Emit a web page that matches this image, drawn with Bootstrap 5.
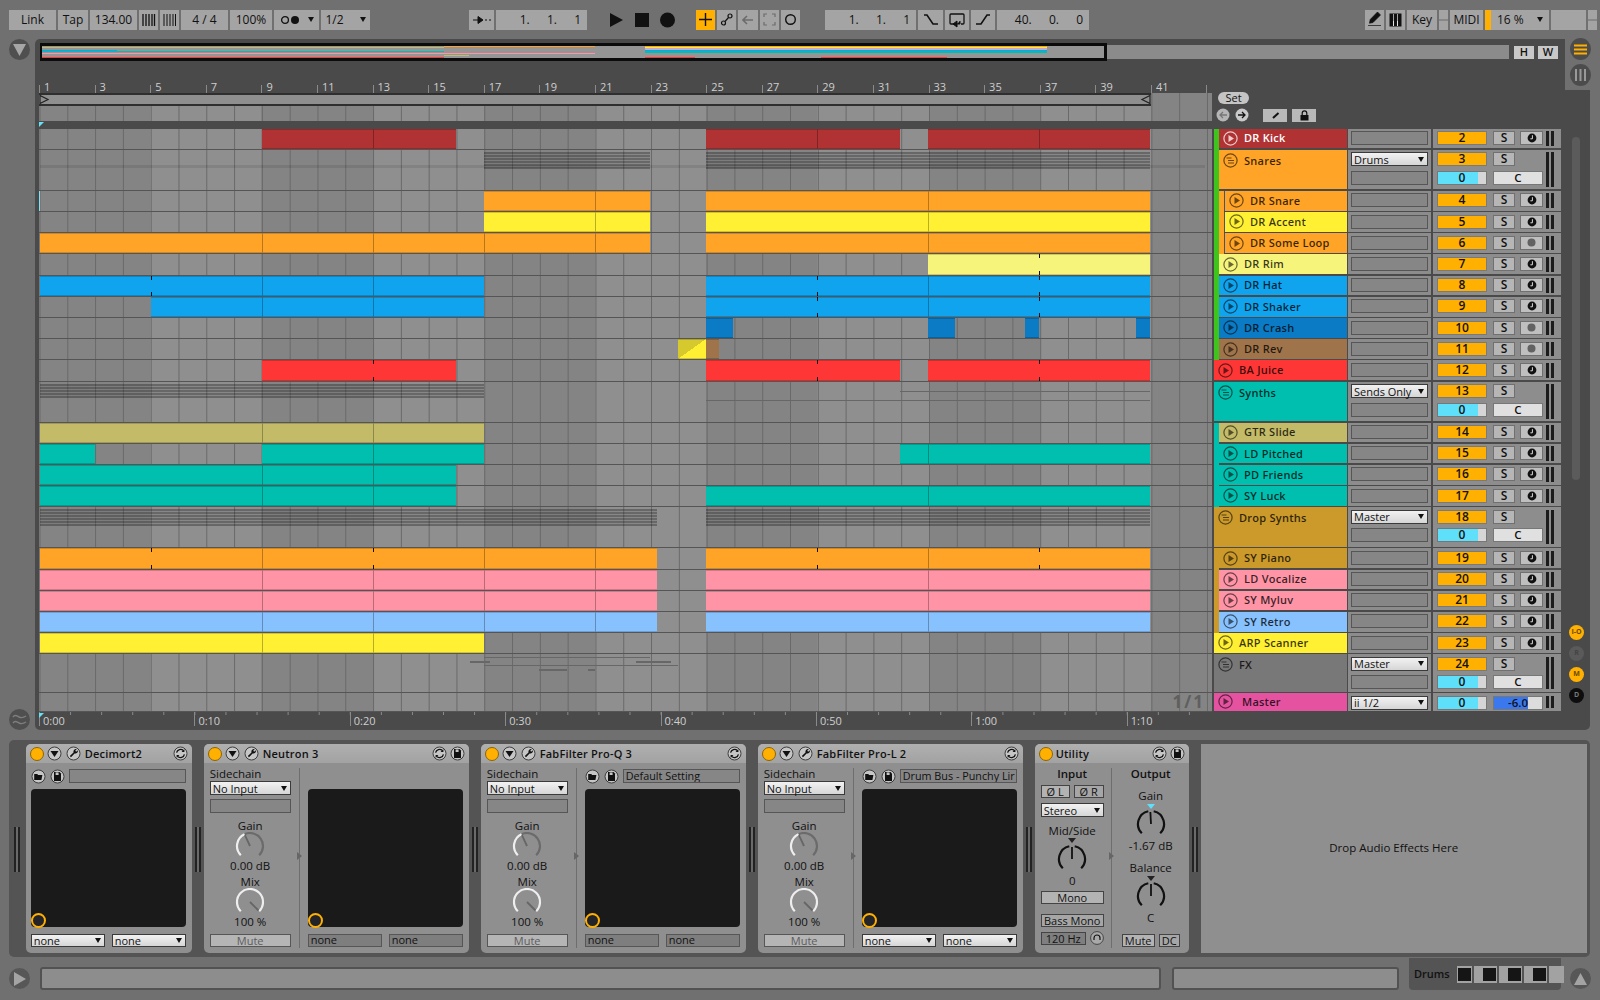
<!DOCTYPE html>
<html lang="en">
<head>
<meta charset="utf-8">
<title>Live Arrangement</title>
<link href="https://cdn.jsdelivr.net/npm/bootstrap@5.3.0/dist/css/bootstrap.min.css" rel="stylesheet">
<style>
html,body{width:1600px;height:1000px;overflow:hidden;margin:0}
body{background:#707070;font-family:"Open Sans","Liberation Sans",sans-serif;font-size:11.5px;color:#111;line-height:1.1}
svg{display:block;flex:none}
/* toolbar */
.toolbar{height:39px;padding-left:9px;gap:2px}
.tgroup{gap:2px;height:20px}
.tb{background:#a4a4a4;height:20px;flex:none;padding:0;border:0;border-radius:0;font-size:12px;line-height:20px;color:#111;display:flex;align-items:center;justify-content:center}
.tb.on{background:#ffb000}
.tb.num{justify-content:flex-end;padding-right:6px;word-spacing:5.5px;white-space:pre}
.w9{width:9px}.w19{width:19px}.w20{width:20px}.w24{width:24px}.w25{width:25px}.w30{width:30px}.w33{width:33px}.w35{width:35px}.w42{width:42px}.w45{width:45px}.w47{width:47px}.w49{width:49px}.w64{width:64px}.w91{width:91px}.w92{width:92px}
.m99{margin-left:97px}.m23{margin-left:21px}.m21{margin-left:19px}.m25{margin-left:23px}.m276{margin-left:274px}
.caret-d{display:block;flex:none;width:0;height:0;border-left:3.5px solid transparent;border-right:3.5px solid transparent;border-top:5px solid #111}
.cpu{background:linear-gradient(to right,#ffb000 6px,#a4a4a4 6px);padding-left:12px;padding-right:6px;justify-content:space-between}
/* workspace */
.work{height:691px}
.gutter{width:35px;flex:none;padding-left:9px}
.gcirc{width:21px;height:21px;border-radius:50%;background:#4f4f4f;display:flex;align-items:center;justify-content:center}
.panel{width:1555px;height:691px;flex:none;background:#4a4a4a;border-radius:5px;padding:4px 0 0 4px;position:relative}
.notch{position:absolute;right:-1px;top:-1px;width:26px;height:52px;background:#707070;display:flex;flex-direction:column;align-items:center;gap:4px;padding-left:4px}
.mcirc{width:21px;height:22px;border-radius:50%;background:#4c4c4c;display:flex;align-items:center;justify-content:center;flex:none}
.overview-row{height:18px;margin-bottom:19px;padding-left:1px}
.ov{width:1469px;display:flex;height:18px}
.ov-main{width:1067px;flex:none;border:3px solid #0b0b0b;border-left-width:2px;background:#959595;display:flex;flex-direction:column;overflow:hidden}
.ov-lane{display:grid;grid-template-columns:repeat(170,6.29px);height:1px;flex:none}
.ov-rest{flex:1;background:#8b8b8b;margin:2px 0 2px}
.hw{background:#c8c8c8;width:20px;height:13px;font-size:11px;font-weight:600;display:flex;align-items:center;justify-content:center;margin-top:3px}
.mlh{margin-left:5px}.mlw{margin-left:4px}
/* lanes */
.lane{display:grid;grid-template-columns:repeat(168,6.95px);grid-template-rows:1fr;width:1173px;flex:none;padding-left:.5px;border-bottom:1.5px solid #555;
background:linear-gradient(to right,#696969 1px,transparent 1px) .5px 0/27.8px 100%,repeating-linear-gradient(to right,#848484 0,#848484 111.2px,#8f8f8f 111.2px,#8f8f8f 222.4px)}
.lane-bg{background:linear-gradient(to right,#696969 1px,transparent 1px) .5px 0/27.8px 100%,repeating-linear-gradient(to right,#848484 0,#848484 111.2px,#8f8f8f 111.2px,#8f8f8f 222.4px)}
.seg{grid-row:1;min-width:0;box-shadow:inset 0 1px rgba(0,0,0,.18),inset 0 -1px rgba(0,0,0,.18)}
.seg.cut{border-left:1px solid rgba(0,0,0,.28)}
.seg.tick{background-image:linear-gradient(#111,#111),linear-gradient(#111,#111);background-size:1px 4px,1px 4px;background-position:0 0,0 100%;background-repeat:no-repeat}
.seg.diag{background-image:linear-gradient(to bottom right,#d6c92e 50%,#fff034 50%)}
.notes{grid-row:1;align-self:start;background:repeating-linear-gradient(to bottom,rgba(0,0,0,.28) 0,rgba(0,0,0,.28) 2px,rgba(0,0,0,.06) 2px,rgba(0,0,0,.06) 3px)}
.note{grid-row:1;align-self:start;background:#676767}
.band{grid-row:1;grid-column:1/169;align-self:start;height:3px;background:rgba(0,0,0,.09)}
.ins{box-shadow:inset 1px 0 #7ae6f4}
.onefrac{grid-row:1;grid-column:158/169;justify-self:end;align-self:center;font-size:17px;letter-spacing:2px;font-weight:700;color:#5f5f5f;line-height:16px;white-space:nowrap}
/* header */
.hdr{height:48.7px}
.hdr-l{width:1173px;flex:none}
.ruler{height:13px;color:#cfcfcf;font-size:11px}
.ruler div{width:55.6px;flex:none;border-left:1px solid #8a8a8a;padding-left:4px;height:8px;margin-top:5px;display:flex;align-items:flex-end;line-height:12px}
.brace-row{height:13px}
.brace{width:1112px;flex:none;background:#8f8f8f;border-top:2px solid #2f2f2f;border-bottom:2px solid #2f2f2f;justify-content:space-between}
.strip-row{height:15px;margin-top:0}
.marker{height:8.7px;position:relative}
.cy{position:absolute;left:0;top:1px;width:0;height:0;border-top:5px solid #63e3f5;border-right:5px solid transparent}
.setp{padding:12px 0 0 6px;gap:4px}
.setb{width:31px;height:12px;background:#c4c4c4;border-radius:6px;font-size:11px;display:flex;align-items:center;justify-content:center}
.setrow{align-items:center;gap:5px;margin-left:-2px}
.smb{width:24px;height:13px;background:#b9b9b9;display:flex;align-items:center;justify-content:center}
.ml9{margin-left:9px}
/* tracks */
.trk{height:21.2px;display:flex;flex:none}
.trk.grp{height:41px}
.trk.fxr{height:38.8px}
.trk.mst{height:19.4px}
.head{width:133px;margin-left:2px;flex:none;display:flex;height:100%}
.strip{width:5px;flex:none;height:100%}
.tbody{flex:1;min-width:0;height:calc(100% - 1.5px);display:flex;align-items:center;font-weight:600;font-size:11px;letter-spacing:.25px;padding-left:4px;gap:6px;white-space:nowrap}
.tbody.nest{border-left:1px solid #46566a;padding-left:4px}
.tbody.g{align-items:flex-start;padding-top:3px}
.tbody.g span{line-height:15px}
.mst .tbody{gap:9px}
.sends{width:83px;margin-left:1px;flex:none;height:calc(100% - 1.5px);background:#8c8c8c;padding:2.5px 3px;display:flex;flex-direction:column;gap:4.5px}
.bx{height:14px;flex:none;background:#868686;border:1.5px solid #565656;padding:0 2px;overflow:hidden;white-space:nowrap;line-height:11px;font-size:11px}
.sel{display:flex;align-items:center;justify-content:space-between;background:linear-gradient(#f2f2f2,#d6d6d6);border:1px solid #3a3a3a;height:14px;padding:0 3px 0 2px;line-height:11px;white-space:nowrap;flex:none;font-size:11px}
.mix{width:128px;margin-left:2px;flex:none;height:calc(100% - 1.5px);background:#8d8d8d;display:flex;padding:2.5px 3px 2.5px 4px}
.mixl{width:106px;flex:none;display:flex;flex-direction:column;gap:4.5px}
.mline{display:flex;gap:6px;height:14px;flex:none}
.numb{width:50px;flex:none;background:#ffb000;border:1px solid #7a7a7a;font-weight:600;font-size:12px;text-align:center;line-height:12px}
.sb{width:22px;flex:none;background:#b6b6b6;border:1px solid #707070;font-size:12px;font-weight:600;text-align:center;line-height:12px}
.mon{width:23px;flex:none;margin-left:-1px;background:#bfbfbf;border:1px solid #707070;display:flex;align-items:center;justify-content:center}
.vol{width:50px;flex:none;background:linear-gradient(to right,#5fe0fa 84%,#d6d6d6 84%);border:1px solid #777;font-weight:600;font-size:12px;text-align:center;line-height:12px}
.cbx{width:50px;flex:none;background:#e0e0e0;border:1px solid #777;font-size:11.5px;font-weight:600;text-align:center;line-height:12px}
.cbx.db{background:linear-gradient(to right,#3a78f0 70%,#dcdcdc 70%)}
.meter{width:8px;flex:none;margin-left:3px;background:linear-gradient(to right,#1c1c1c 3px,#8d8d8d 3px,#8d8d8d 5px,#1c1c1c 5px)}
.side{width:29px;flex:none}
.scroll{width:8px;height:343px;margin:8px 0 0 11px;background:#5b5b5b;border-radius:4px}
.sidec{margin:145px 0 0 8px;gap:6px}
.sc{width:15px;height:15px;border-radius:50%;font-size:7px;font-weight:700;display:flex;align-items:center;justify-content:center;background:#ffb000;color:#6b4a00;flex:none}
.sc.off{background:#5a5a5a;color:#444}
.sc.dark{background:#0d0d0d;color:#777}
.times{width:1173px;height:17.3px;color:#cfcfcf;font-size:11px;background:linear-gradient(to right,#8a8a8a 1px,transparent 1px) 0 0/31.08px 3px repeat-x;position:relative}
.times div{width:155.4px;flex:none;border-left:1px solid #8a8a8a;height:14px;padding:2px 0 0 3px;line-height:13px}
/* devices */
.devs{margin:10px 0 0 9px;width:1581px;height:217px;background:#545454;border-radius:5px;padding:4px 3px 4px 0;display:flex}
.grip{width:16.7px;flex:none;display:flex;justify-content:center;padding-top:83px}
.grip.g12{width:12px}
.grip i{display:block;width:6px;height:45px;background:linear-gradient(to right,#222 2px,#6a6a6a 2px,#6a6a6a 4px,#222 4px)}
.dev{background:#8f8f8f;border:0;border-radius:5px;overflow:hidden;flex:none;height:209px;color:#111}
.w166{width:166px}.w265{width:265px}.w154{width:154px}
.dev .card-header{background:linear-gradient(#b0b0b0,#a2a2a2);height:19.3px;padding:0 3.5px 0 4px;border:0;border-radius:0;display:flex;align-items:center;font-weight:600;font-size:11px;letter-spacing:.2px;white-space:nowrap}
.pow{width:14px;height:14px;border-radius:50%;background:#ffb000;border:1px solid #8c6400;flex:none;margin-right:3px}
.ic{margin-right:4px}
.hbtn{gap:3px}
.hbtn .ic{margin-right:0}
.dev .card-body{padding:0;height:189.7px;display:flex}
.lc{width:81px;margin-left:6px;flex:none;display:flex;flex-direction:column;align-items:stretch;padding-top:5px}
.lab{height:12px;line-height:12px;text-align:center;flex:none;font-size:11.5px;white-space:nowrap}
.lab.l{text-align:left}
.knobw{display:flex;justify-content:center;flex:none;height:28px}
.vdiv{width:1px;background:#6e6e6e;margin:5px 0 5px 8px;flex:none;position:relative}
.vdiv:after{content:"";position:absolute;left:-2px;top:84px;border-left:5px solid #666;border-top:4px solid transparent;border-bottom:4px solid transparent}
.rc{width:155px;margin-left:8px;flex:none;display:flex;flex-direction:column;padding-top:6px}
.rc.solo{margin-left:5px}
.prow{height:14px;flex:none;gap:4px;align-items:center;display:flex}
.prow .bx{flex:1;min-width:0;font-size:10.8px}
.blackbox{flex:none;height:138px;margin-top:6px;background:#1a1a1a;border-radius:4px;display:flex;align-items:flex-end}
.ring{width:15px;height:15px;border-radius:50%;border:2px solid #ffb000;background:#22242a;flex:none;margin-bottom:-1px}
.pair{display:flex;justify-content:space-between;margin-top:7px}
.pair>*{width:74px}
.pair .bx{background:#7e7e7e;height:13px;line-height:10px;overflow:visible}
.pair .sel{height:13px}
.mute{height:13px;flex:none;margin-top:6px;background:#b5b5b5;border:1px solid #565656;color:#5c5c5c;text-align:center;line-height:11px;font-size:11px}
.ub{background:#a6a6a6;border:1px solid #444;height:13px;text-align:center;line-height:11px;flex:none;font-size:11px;white-space:nowrap}
.ub.lt{background:#b3b3b3}
.ub.dk{background:#7f7f7f}
.tri-b{width:0;height:0;border-left:4px solid transparent;border-right:4px solid transparent;border-top:5px solid #222;flex:none;align-self:center}
.tri-c{border-top-color:#5fe0fa}
.ucl{width:63px;margin-left:6px;flex:none;display:flex;flex-direction:column;padding-top:5px}
.ucr{width:58px;margin-left:10px;flex:none;display:flex;flex-direction:column;padding-top:5px}
.udiv{width:1px;background:#6e6e6e;margin:5px 0 5px 7px;flex:none;position:relative}
.udiv:after{content:"";position:absolute;left:-2px;top:84px;border-left:5px solid #666;border-top:4px solid transparent;border-bottom:4px solid transparent}
.mt5{margin-top:5px}.mt7{margin-top:7px}.mt8{margin-top:8px}.mt10{margin-top:10px}.mt2{margin-top:2px}.mt1{margin-top:1px}.mt4{margin-top:4px}
.drop{width:386px;flex:none;height:209px;background:#8f8f8f;display:flex;align-items:center;justify-content:center;font-size:11.5px}
/* bottom */
.bottom{height:43px;padding-left:9px;align-items:flex-start}
.pbtn{width:21px;height:21px;margin-top:11px;border-radius:50%;background:#575757;display:flex;align-items:center;justify-content:center;flex:none}
.field{height:23px;margin-top:10px;background:#8d8d8d;border:2px solid #525252;border-radius:3px;flex:none}
.f1{width:1121px;margin-left:10px}.f2{width:227px;margin-left:11px}
.dtab{width:152px;height:32px;margin:1px 0 0 10px;background:#545454;border-radius:0 0 4px 4px;flex:none;display:flex;align-items:center;padding-left:5px;gap:2px;font-weight:600;font-size:11px}
.dtab span{margin-right:5px}
.th{height:17px;flex:none;background:#a2a2a2;display:flex;justify-content:flex-end}
.th i{display:block;width:13px;height:13px;margin:2px 1px;background:#151515}
.tw15{width:15px}.tw22{width:23px}
.ubtn{margin:11px 0 0 9px;width:21px;height:21px;border-radius:50%;background:#575757;display:flex;align-items:center;justify-content:center;flex:none}
</style>
</head>
<body>
<!-- transport -->
<div class="toolbar d-flex align-items-center">
  <button class="btn tb w47">Link</button>
  <button class="btn tb w30">Tap</button>
  <button class="btn tb w47">134.00</button>
  <div class="tb w19"><svg width="15" height="14"><path d="M2 1v12M5 1v12M8 1v12M11 1v12M13.5 1v12" stroke="#111" stroke-width="1.3"/></svg></div>
  <div class="tb w19"><svg width="15" height="14"><path d="M2 1v12M5 1v12M8 1v12M11 1v12M13.5 1v12" stroke="#111" stroke-width="1"/></svg></div>
  <button class="btn tb w47">4 / 4</button>
  <button class="btn tb w42">100%</button>
  <div class="tb w45 gap-2"><svg width="20" height="10"><circle cx="5" cy="5" r="3.4" fill="none" stroke="#111" stroke-width="1.3"/><circle cx="15" cy="5" r="4" fill="#111"/></svg><i class="caret-d"></i></div>
  <div class="tb w49 gap-3"><span>1/2</span><i class="caret-d"></i></div>
  <div class="d-flex tgroup m99">
    <div class="tb w25"><svg width="20" height="10"><path d="M1 5h6M6 1.5l5 3.5-5 3.5z" stroke="#111" fill="#111"/><path d="M13 5h2M17 5h2" stroke="#111"/></svg></div>
    <div class="tb w91 num">1.  1.  1</div>
  </div>
  <svg class="m23" width="65" height="20"><path d="M0 3l13 7-13 7z" fill="#111"/><rect x="25" y="3" width="14" height="14" fill="#111"/><circle cx="57.5" cy="10" r="7.5" fill="#111"/></svg>
  <div class="d-flex tgroup m21">
    <div class="tb w19 on"><svg width="13" height="13"><path d="M6.5 0v13M0 6.5h13" stroke="#111" stroke-width="1.4"/></svg></div>
    <div class="tb w19"><svg width="13" height="13"><circle cx="3.5" cy="10" r="2" fill="none" stroke="#111" stroke-width="1.2"/><circle cx="10" cy="3" r="2" fill="none" stroke="#111" stroke-width="1.2"/><path d="M5 8.5l3.5-4" stroke="#111" stroke-width="1.2"/></svg></div>
    <div class="tb w20"><svg width="12" height="10"><path d="M1 5h10M5 1L1 5l4 4" stroke="#6c6c6c" stroke-width="1.6" fill="none"/></svg></div>
    <div class="tb w19"><svg width="13" height="13"><path d="M1 4V1h3M9 1h3v3M12 9v3H9M4 12H1V9" stroke="#6c6c6c" fill="none" stroke-width="1.2"/></svg></div>
    <div class="tb w19"><svg width="13" height="13"><circle cx="6.5" cy="6.5" r="4.8" fill="none" stroke="#111" stroke-width="1.4"/></svg></div>
  </div>
  <div class="d-flex tgroup m25">
    <div class="tb w91 num">1.  1.  1</div>
    <div class="tb w25"><svg width="18" height="14"><path d="M2 2h3l6 9h5" stroke="#111" stroke-width="1.6" fill="none"/></svg></div>
    <div class="tb w24"><svg width="18" height="16"><path d="M8 12H3a1 1 0 0 1-1-1V3a1 1 0 0 1 1-1h12a1 1 0 0 1 1 1v8a1 1 0 0 1-1 1h-2" stroke="#111" stroke-width="1.3" fill="none"/><path d="M9 15l-4-3 4-3zM9 12h3V9" fill="#111" stroke="#111"/></svg></div>
    <div class="tb w24"><svg width="18" height="14"><path d="M2 11h5l6-9h3" stroke="#111" stroke-width="1.6" fill="none"/></svg></div>
    <div class="tb w92 num">40.  0.  0</div>
  </div>
  <div class="d-flex tgroup m276">
    <div class="tb w19"><svg width="13" height="15"><path d="M9.5 0l3 3-7.5 7.5-3.5.7.7-3.7zM0 13.5h13" fill="#111" stroke="#111" stroke-width=".7"/></svg></div>
    <div class="tb w19"><svg width="13" height="14"><rect x=".5" y=".5" width="12" height="13" fill="#111"/><path d="M4.5 1v12M8.5 1v12" stroke="#a4a4a4"/><path d="M4.5 8v5M8.5 8v5" stroke="#e4e4e4" stroke-width="1"/></svg></div>
    <div class="tb w30">Key</div>
    <div class="tb w9"><svg width="9" height="20"><path d="M0 10h9" stroke="#6a6a6a"/></svg></div>
    <div class="tb w33">MIDI</div>
    <div class="tb w64 cpu"><span>16 %</span><i class="caret-d"></i></div>
    <div class="tb w35"></div>
    <div class="tb w9"><svg width="9" height="20"><path d="M0 10h9" stroke="#6a6a6a"/></svg></div>
  </div>
</div>

<div class="work d-flex">
  <div class="gutter d-flex flex-column justify-content-between">
    <div class="gcirc"><svg width="13" height="13"><path d="M0 1h13L6.5 13z" fill="#a6a6a6"/></svg></div>
    <div class="gcirc"><svg width="15" height="13"><path d="M1 4c2-3 4-1 6 0s4 1 7-1M1 10c2-3 4-1 6 0s4 1 7-1" stroke="#7e7e7e" stroke-width="1.4" fill="none"/></svg></div>
  </div>
  <div class="panel">
    <div class="notch">
      <div class="mcirc"><svg width="13" height="11"><path d="M0 1.5h13M0 5.5h13M0 9.5h13" stroke="#ffb000" stroke-width="2"/></svg></div>
      <div class="mcirc"><svg width="13" height="14"><path d="M2 1v12M6.5 1v12M11 1v12" stroke="#999" stroke-width="2"/></svg></div>
    </div>
    <div class="overview-row d-flex">
      <div class="ov"><div class="ov-main" id="ov"></div><div class="ov-rest"></div></div>
      <div class="hw mlh">H</div><div class="hw mlw">W</div>
    </div>
    <div class="hdr d-flex">
      <div class="hdr-l">
        <div class="ruler d-flex" id="ruler"></div>
        <div class="brace-row d-flex lane-bg">
          <div class="brace d-flex align-items-center">
            <svg width="11" height="9"><path d="M1 .5l8 4-8 4z" fill="none" stroke="#222" stroke-width="1.2"/></svg>
            <svg width="11" height="9"><path d="M10 .5l-8 4 8 4z" fill="none" stroke="#222" stroke-width="1.2"/></svg>
          </div>
        </div>
        <div class="strip-row lane-bg"></div>
        <div class="marker"><i class="cy"></i></div>
      </div>
      <div class="setp d-flex flex-column">
        <div class="setb">Set</div>
        <div class="d-flex setrow">
          <svg width="14" height="14"><circle cx="7" cy="7" r="6.5" fill="#b5b5b5"/><path d="M11 7H4M7 4L4 7l3 3" stroke="#777" stroke-width="1.3" fill="none"/></svg>
          <svg width="14" height="14"><circle cx="7" cy="7" r="6.5" fill="#c9c9c9"/><path d="M3 7h7M7 4l3 3-3 3" stroke="#111" stroke-width="1.3" fill="none"/></svg>
          <div class="smb ml9"><svg width="11" height="9"><path d="M8.5 2L3 7" stroke="#111" stroke-width="2"/></svg></div>
          <div class="smb"><svg width="11" height="11"><rect x="1.5" y="5" width="8" height="5.5" fill="#111"/><path d="M3.2 5V3.2a2.3 2.3 0 0 1 4.6 0V5" stroke="#111" fill="none" stroke-width="1.2"/></svg></div>
        </div>
      </div>
    </div>
    <div class="d-flex">
      <div id="rows"></div>
      <div class="side">
        <div class="scroll"></div>
        <div class="sidec d-flex flex-column">
          <div class="sc">I-O</div><div class="sc off">R</div><div class="sc">M</div>
          <div class="sc dark">D</div>
        </div>
      </div>
    </div>
    <div class="times d-flex" id="times"></div>
  </div>
</div>

<div class="devs" id="devs"></div>

<div class="bottom d-flex">
  <div class="pbtn"><svg width="13" height="14"><path d="M1 0l12 7-12 7z" fill="#a4a4a4"/></svg></div>
  <div class="field f1"></div>
  <div class="field f2"></div>
  <div class="dtab"><span>Drums</span>
    <div class="th tw15"><i></i></div><div class="th tw22"><i></i></div><div class="th tw22"><i></i></div><div class="th tw22"><i></i></div><div class="th tw15"></div>
  </div>
  <div class="ubtn"><svg width="13" height="12"><path d="M6.5 0L13 12H0z" fill="#a4a4a4"/></svg></div>
</div>

<script>
const OR='#ffa426',YE='#fff034',RI='#f7f47c',BL='#10a4ee',CR='#0a7bc4',BR='#a0744a',RD='#ff3636',TE='#00bfaf',GT='#c3bb68',DS='#cb9a2a',PK='#ff94a6',SK='#88c2fe',KI='#b03232',GR='#3fc41e',FX='#787878',MA='#e553a0';
const T=[
 {n:'DR Kick',c:KI,s:[GR],k:2,light:1,all:1,cl:[[8,15],[24,31],[32,40]]},
 {n:'Snares',c:OR,s:[GR],g:1,k:3,sel:'Drums',nt:[[16,22],[24,40]],nh:17,band:15},
 {n:'DR Snare',c:OR,s:[GR,OR],nest:1,k:4,cl:[[16,22],[24,40]],ins:1},
 {n:'DR Accent',c:YE,s:[GR,OR],nest:1,k:5,cl:[[16,22],[24,40]]},
 {n:'DR Some Loop',c:OR,s:[GR,OR],nest:1,k:6,cl:[[0,22],[24,40]],off:1},
 {n:'DR Rim',c:RI,s:[GR],k:7,cl:[[32,40]],t:[36]},
 {n:'DR Hat',c:BL,s:[GR],k:8,cl:[[0,16],[24,40]],t:[4,28,36]},
 {n:'DR Shaker',c:BL,s:[GR],k:9,cl:[[4,16],[24,40]],t:[28,36]},
 {n:'DR Crash',c:CR,s:[GR],k:10,cl:[[24,25],[32,33],[35.5,36],[39.5,40]],off:1},
 {n:'DR Rev',c:BR,s:[GR],k:11,cl:[[23,24,YE,'diag'],[24,24.5]],off:1},
 {n:'BA Juice',c:RD,s:[],k:12,cl:[[8,15],[24,31],[32,40]],t:[12,28,36]},
 {n:'Synths',c:TE,s:[],g:1,k:13,sel:'Sends Only',nt:[[0,16]],nh:14,ex:[[24,40,18,1],[31,40,9,1]]},
 {n:'GTR Slide',c:GT,s:[TE],k:14,cl:[[0,16]]},
 {n:'LD Pitched',c:TE,s:[TE],k:15,cl:[[0,2],[8,16],[31,40]]},
 {n:'PD Friends',c:TE,s:[TE],k:16,cl:[[0,15]]},
 {n:'SY Luck',c:TE,s:[TE],k:17,cl:[[0,15],[24,40]]},
 {n:'Drop Synths',c:DS,s:[],g:1,k:18,sel:'Master',nt:[[0,22.25],[24,40]],nh:17},
 {n:'SY Piano',c:DS,s:[DS],k:19,cl:[[0,22.25,OR],[24,40,OR]],t:[4,12,28,36]},
 {n:'LD Vocalize',c:PK,s:[DS],k:20,cl:[[0,22.25],[24,40]]},
 {n:'SY Myluv',c:PK,s:[DS],k:21,cl:[[0,22.25],[24,40]]},
 {n:'SY Retro',c:SK,s:[DS],k:22,cl:[[0,22.25],[24,40]]},
 {n:'ARP Scanner',c:YE,s:[],k:23,cl:[[0,16]]},
 {n:'FX',c:FX,s:[],g:1,fx:1,k:24,sel:'Master',ex:[[16,22,3,1],[15.5,16.25,7,2],[21.5,22.75,7,2],[16,23,11,1],[18,19,15,2],[19.75,20,15,2]]},
 {n:'Master',c:MA,s:[],mst:1,play:1}
];
const ov4=v=>Math.round(v*4)+1;
function segs(r){let h='';(r.cl||[]).forEach(x=>{
  const [a,b,col,cls]=x;const c=col||r.c;const pts=[a];const tk=r.t||[];
  for(let m=Math.ceil((a+.01)/4)*4;m<b;m+=4){if(tk.includes(m)||r.all&&m!==4||![4,28,36].includes(m))pts.push(m)}
  pts.push(b);
  for(let i=0;i<pts.length-1;i++){
    const p=pts[i];
    const k=[tk.includes(p)?'tick':(i>0?'cut':''),cls||''].join(' ');
    h+=`<div class="seg ${k}" style="grid-column:${ov4(p)}/${ov4(pts[i+1])};background-color:${c}"></div>`;
  }
});return h}
function notes(r){let h='';
 if(r.band)h+=`<div class="band" style="margin-top:${r.band}px"></div>`;
 (r.nt||[]).forEach(n=>{h+=`<div class="notes" style="grid-column:${ov4(n[0])}/${ov4(n[1])};height:${r.nh}px;margin-top:2px"></div>`});
 (r.ex||[]).forEach(n=>{h+=`<div class="note" style="grid-column:${ov4(n[0])}/${ov4(n[1])};height:${n[3]}px;margin-top:${n[2]}px"></div>`});return h}
const ringc=r=>r.light?'rgba(255,255,255,.75)':'rgba(0,0,0,.58)';
function icon(r){const c=ringc(r);
 if(r.g)return `<svg width="15" height="15"><circle cx="7.5" cy="7.5" r="6.6" fill="none" stroke="${c}" stroke-width="1.2"/><path d="M3.5 5h5M5 7.5h6M5 10h6" stroke="${c}" stroke-width="1.1"/></svg>`;
 return `<svg width="15" height="15"><circle cx="7.5" cy="7.5" r="6.6" fill="none" stroke="${c}" stroke-width="1.2"/><path d="M5.5 4l5.5 3.5L5.5 11z" fill="${c}"/></svg>`}
const txtc=r=>r.light?'#fff':'rgba(0,0,0,.78)';
const sel=(t,c='')=>`<div class="sel ${c}"><span>${t}</span><i class="caret-d"></i></div>`;
const monI=`<svg width="10" height="10"><circle cx="5" cy="5" r="4.4" fill="#111"/><path d="M5.4 2.2v3.6H3.4" stroke="#ddd" fill="none" stroke-width="1"/></svg>`;
const monO=`<svg width="9" height="9"><circle cx="4.5" cy="4.5" r="4" fill="#626262"/></svg>`;
function mixer(r){
 if(r.mst)return `<div class="sends"><div class="sel"><span>ii 1/2</span><i class="caret-d"></i></div></div>
  <div class="mix"><div class="mixl"><div class="mline"><div class="vol">0</div><div class="cbx db">-6.0</div></div></div><div class="meter"></div></div>`;
 if(r.g)return `<div class="sends">${sel(r.sel)}<div class="bx"></div></div>
  <div class="mix"><div class="mixl"><div class="mline"><div class="numb">${r.k}</div><div class="sb">S</div></div>
   <div class="mline"><div class="vol">0</div><div class="cbx">C</div></div></div><div class="meter"></div></div>`;
 return `<div class="sends"><div class="bx"></div></div>
  <div class="mix"><div class="mixl"><div class="mline"><div class="numb">${r.k}</div><div class="sb">S</div><div class="mon">${r.off?monO:monI}</div></div></div><div class="meter"></div></div>`;
}
document.getElementById('rows').innerHTML=T.map(r=>{
 const cls=r.fx?'fxr':(r.g?'grp':(r.mst?'mst':''));
 const strips=r.s.map(c=>`<i class="strip" style="background:${c}"></i>`).join('');
 const one=r.mst?'<div class="onefrac">1/1</div>':'';
 return `<div class="trk ${cls}"><div class="lane ${r.ins?'ins':''}">${segs(r)}${notes(r)}${one}</div>
  <div class="head">${strips}<div class="tbody ${r.nest?'nest':''} ${r.g?'g':''}" style="background:${r.c};color:${txtc(r)}">${icon(r)}<span>${r.n}</span></div></div>${mixer(r)}</div>`}).join('');
// ruler
let rh='';for(let b=1;b<=41;b+=2)rh+=`<div>${b}</div>`;rh+='<div></div>';document.getElementById('ruler').innerHTML=rh;
// time
document.getElementById('times').innerHTML='<i class="cy"></i>'+['0:00','0:10','0:20','0:30','0:40','0:50','1:00','1:10'].map(t=>`<div>${t}</div>`).join('');
// overview
const O=[[[16,22,OR],[24,40,OR]],[[0,16,GT],[24,40,YE]],[[24,40,PK]],[[24,40,SK]],[[0,3,BL],[24,40,BL]],[[0,16,TE],[24,40,TE]],[[24,40,TE]],[[0,22,PK]],[],[[16,17,GT]],[],[[0,16,RD],[24,26,RD],[31,36,RD]]];
document.getElementById('ov').innerHTML=O.map(a=>`<div class="ov-lane">${a.map(s=>`<div style="grid-column:${ov4(s[0])}/${ov4(s[1])};grid-row:1;background:${s[2]}"></div>`).join('')}</div>`).join('');
// devices
const rnd=i=>`<svg class="ic" width="15" height="15"><circle cx="7.5" cy="7.5" r="6.5" fill="#c6c6c6" stroke="#3e3e3e"/>${i}</svg>`;
const TRI='<path d="M3.5 5h8l-4 6z" fill="#111"/>',
 WR='<path d="M10.8 3.2a2.6 2.6 0 0 0-3.3 3.2L3.8 10l1.2 1.2 3.6-3.7a2.6 2.6 0 0 0 3.2-3.3L10.2 5.8 9.2 4.8z" fill="#111"/>',
 SW='<path d="M3.6 6.6A4 4 0 0 1 10.4 4.6M11.4 8.4A4 4 0 0 1 4.6 10.4" fill="none" stroke="#111" stroke-width="1.3"/><path d="M11.4 3v3H8.6zM3.6 12V9h2.8z" fill="#111"/>',
 SV='<path d="M4 3h5.5L11 4.5V12H4z" fill="#111"/><rect x="5.6" y="3.4" width="3" height="2.6" fill="#c6c6c6"/>',
 FO='<path d="M3.2 5h3l1 1h4.2l-1 5H3.2z" fill="#111"/>';
function pol(a,r){const t=a*Math.PI/180;return [(15+r*Math.sin(t)).toFixed(2),(15-r*Math.cos(t)).toFixed(2)]}
function arc(a,b,c,w){const p=pol(a,13),q=pol(b,13);return `<path d="M${p}A13 13 0 ${b-a>180?1:0} 1 ${q}" fill="none" stroke="${c}" stroke-width="${w}"/>`}
function knob(kind,a){const n=pol(a,12);
 if(kind==='g')return `<svg width="30" height="28" viewBox="0 1 30 28">${a<135?arc(a,135,'#6b6b6b',2.2):''}${arc(-135,a,'#eee',2.2)}<path d="M15 15L${n}" stroke="#666" stroke-width="1.8"/></svg>`;
 return `<svg width="30" height="28" viewBox="0 1 30 28">${arc(-135,-12,'#111',2.2)}${arc(12,135,'#111',2.2)}<path d="M15 15L${n}" stroke="#111" stroke-width="1.8"/></svg>`}
const lc=`<div class="lc"><div class="lab l">Sidechain</div><div class="sel mt1"><span>No Input</span><i class="caret-d"></i></div><div class="bx mt4"></div>
 <div class="lab mt7">Gain</div><div class="knobw">${knob('g',-25)}</div><div class="lab">0.00 dB</div>
 <div class="lab mt4">Mix</div><div class="knobw">${knob('g',135)}</div><div class="lab">100 %</div><div class="mute">Mute</div></div><div class="vdiv"></div>`;
function right(o){
 const top=o.preset===undefined?'<div class="prow"></div>':`<div class="prow">${rnd(FO).replace('class="ic"','')}${rnd(SV).replace('class="ic"','')}<div class="bx">${o.preset}</div></div>`;
 const bot=o.active?sel('none')+sel('none'):'<div class="bx">none</div><div class="bx">none</div>';
 return `<div class="rc ${o.solo?'solo':''}">${top}<div class="blackbox"><i class="ring"></i></div><div class="pair">${bot}</div></div>`}
const hdr=(t,btn,tools=1)=>`<div class="card-header"><i class="pow"></i>${tools?rnd(TRI)+rnd(WR):''}<span>${t}</span><span class="ms-auto d-flex hbtn">${btn.map(rnd).join('')}</span></div>`;
const grip=(c='')=>`<div class="grip ${c}"><i></i></div>`;
const util=`<div class="card dev w154">${hdr('Utility',[SW,SV],0)}<div class="card-body">
 <div class="ucl"><div class="lab"><b class="fw-semibold">Input</b></div>
  <div class="d-flex justify-content-between mt5"><div class="ub lt flex-fill">Ø L</div><div class="ub flex-fill ms-1">Ø R</div></div>
  ${sel('Stereo','mt5')}
  <div class="lab mt8">Mid/Side</div><div class="tri-b mt1"></div><div class="knobw mt2">${knob('u',0)}</div><div class="lab mt2">0</div>
  <div class="ub lt mt4">Mono</div><div class="ub mt10">Bass Mono</div>
  <div class="d-flex mt4 align-items-center"><div class="ub dk flex-fill">120 Hz</div><svg class="ms-1" width="14" height="14"><circle cx="7" cy="7" r="6.4" fill="#a9a9a9" stroke="#444"/><path d="M4 9V7a3 3 0 0 1 6 0v2" fill="none" stroke="#111" stroke-width="1.2"/></svg></div>
 </div><div class="udiv"></div>
 <div class="ucr"><div class="lab"><b class="fw-semibold">Output</b></div><div class="lab mt10">Gain</div><div class="tri-b tri-c mt2"></div><div class="knobw mt1">${knob('u',-3)}</div>
  <div class="lab mt2">-1.67 dB</div><div class="lab mt10">Balance</div><div class="tri-b mt2"></div><div class="knobw mt1">${knob('u',0)}</div><div class="lab mt2">C</div>
  <div class="d-flex justify-content-between mt10"><div class="ub lt flex-fill">Mute</div><div class="ub ms-1 flex-fill">DC</div></div></div>
 </div></div>`;
document.getElementById('devs').innerHTML=grip()+
`<div class="card dev w166">${hdr('Decimort2',[SW])}<div class="card-body">${right({solo:1,preset:'',active:1})}</div></div>`+grip('g12')+
`<div class="card dev w265">${hdr('Neutron 3',[SW,SV])}<div class="card-body">${lc}${right({})}</div></div>`+grip('g12')+
`<div class="card dev w265">${hdr('FabFilter Pro-Q 3',[SW])}<div class="card-body">${lc}${right({preset:'Default Setting'})}</div></div>`+grip('g12')+
`<div class="card dev w265">${hdr('FabFilter Pro-L 2',[SW])}<div class="card-body">${lc}${right({preset:'Drum Bus - Punchy Lir',active:1})}</div></div>`+grip('g12')+
util+grip('g12')+`<div class="drop">Drop Audio Effects Here</div>`;
</script>
<script src="https://cdn.jsdelivr.net/npm/bootstrap@5.3.0/dist/js/bootstrap.bundle.min.js"></script>
</body>
</html>
